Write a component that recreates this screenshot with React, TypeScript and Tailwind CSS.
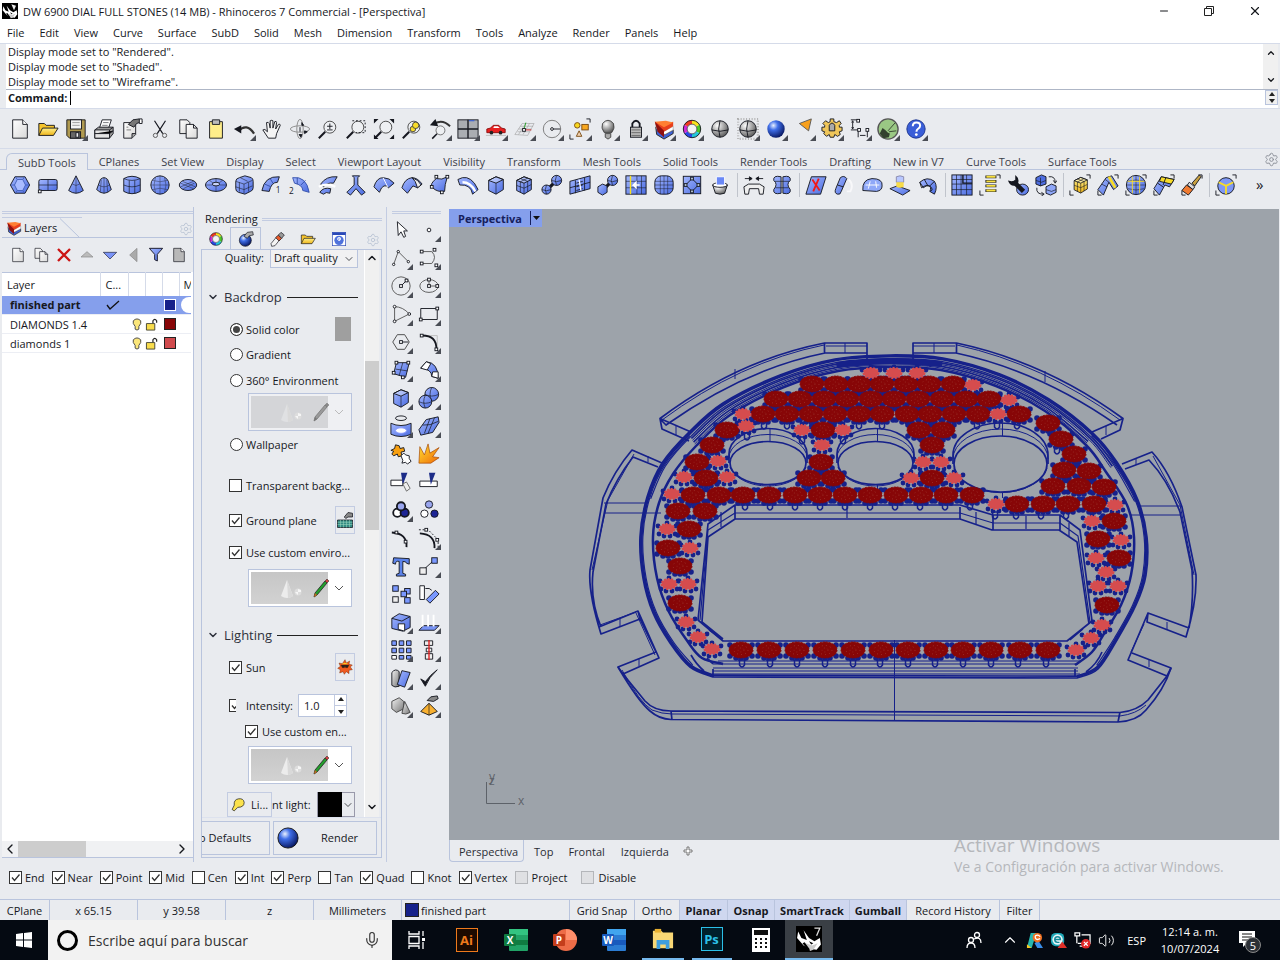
import { useState, type ReactNode } from "react";
import { ChevronDown, ChevronLeft, ChevronRight, ChevronUp, Mic, Minus, Settings, Volume2, X } from "lucide-react";

type Point = [number, number];

const menus = ["File", "Edit", "View", "Curve", "Surface", "SubD", "Solid", "Mesh", "Dimension", "Transform", "Tools", "Analyze", "Render", "Panels", "Help"];

const toolTabs = ["SubD Tools", "CPlanes", "Set View", "Display", "Select", "Viewport Layout", "Visibility", "Transform", "Mesh Tools", "Solid Tools", "Render Tools", "Drafting", "New in V7", "Curve Tools", "Surface Tools"];

const K = "#15171f";
const B = "url(#blue)";
const G = "url(#grey)";
const Y = "url(#yellow)";

/* Small building blocks shared by the icons */
const Sq = ({ x, y, f = "#fff" }: { x: number; y: number; f?: string }) => (
  <rect x={x - 1.5} y={y - 1.5} width="3" height="3" fill={f} stroke={K} strokeWidth="1" />
);
const Ball = ({ x, y, r }: { x: number; y: number; r: number }) => (
  <g stroke={K} fill="none">
    <circle cx={x} cy={y} r={r} fill={B} />
    <path d={`M${x - r} ${y}q${r} ${r / 2} ${2 * r} 0M${x} ${y - r}q${-r / 2} ${r} 0 ${2 * r}`} strokeWidth=".7" />
  </g>
);
const Cube = ({ f = B, grid = false }: { f?: string; grid?: boolean }) => (
  <g stroke={K} strokeLinejoin="round">
    <path d="M4 7l8-4 8 3v11l-8 5-8-4z" fill={f} />
    <path d="M4 7l8 3 8-4-8-3z" fill="#fff" fillOpacity=".35" />
    <path d="M12 10v12" fill="none" strokeWidth=".7" />
    {grid && <path d="M8 8.500v11.500M16 8v11.500M4 12.500l8 3 8-4M8 5l8 3M16 4.500l-8 4" fill="none" strokeWidth=".7" />}
  </g>
);
const Brackets = () => <path d="M1 18v5h4M19 1h4v4" fill="none" stroke={K} />;
const Sheet = ({ f = "url(#paper)" }: { f?: string }) => (
  <g stroke={K} strokeLinejoin="round">
    <path d="M4 2h11l5 5v15H4z" fill={f} />
    <path d="M15 2v5h5" fill="#fff" />
  </g>
);
const Shaded = () => (
  <g stroke={K} fill="none">
    <circle cx="12" cy="12" r="9" fill="url(#steel)" />
    <path d="M3 13q9 3 18 0M12 3q-3 9 0 18" />
  </g>
);
const Layers = () => (
  <g strokeLinejoin="round">
    <path d="M3 10l10 8 9-5v4l-10 6-8-5z" fill="#3e62d6" stroke="#222" />
    <path d="M3 7l10 7 9-5v4l-9 5-9-6z" fill="#fff" stroke="#888" strokeWidth=".6" />
    <path d="M2 4l11 2 9-2v5l-10 6-8-5z" fill="#e8401c" />
    <path d="M2 4l12-1 8 2-10 5z" fill="#ff7f32" />
    <path d="M2 4l3 11 7 6v-7z" fill="#8e1010" />
  </g>
);
const Wheel = () => (
  <g fill="none" strokeWidth="4">
    <path d="M12 4.500a7.500 7.500 0 0 1 6.500 3.750" stroke="#f8e21c" />
    <path d="M18.500 8.250a7.500 7.500 0 0 1 0 7.500" stroke="#4cc928" />
    <path d="M18.500 15.750a7.500 7.500 0 0 1-6.500 3.750" stroke="#22c8d8" />
    <path d="M12 19.500a7.500 7.500 0 0 1-6.500-3.750" stroke="#2848e8" />
    <path d="M5.500 15.750a7.500 7.500 0 0 1 0-7.500" stroke="#d228d8" />
    <path d="M5.500 8.250a7.500 7.500 0 0 1 6.500-3.750" stroke="#f03a20" />
    <circle cx="12" cy="12" r="9.500" stroke={K} strokeWidth="1" />
    <circle cx="12" cy="12" r="5.300" fill="#f4f4f4" stroke={K} strokeWidth=".7" />
  </g>
);
const Folder = () => (
  <g stroke={K} strokeLinejoin="round">
    <path d="M2 19V6h6l2 2h9v4" fill="#f6c42c" />
    <path d="M2 19l4-8h17l-5 8z" fill="url(#yellow)" />
  </g>
);
const Lens = ({ children }: { children?: ReactNode }) => (
  <g fill="none" stroke="#444">
    <path d="M9 15l-7 7" stroke={K} strokeWidth="2.200" />
    <circle cx="14" cy="10" r="6.500" fill="#eef0f3" />
    {children}
  </g>
);

const icons: Record<string, ReactNode> = {
  new: <Sheet />,
  open: <Folder />,
  save: <g stroke={K}><path d="M2 2h20v20H5l-3-3z" fill="#b09a50" /><rect x="6" y="2" width="12" height="10" fill="#f2f2f2" /><rect x="6" y="15" width="11" height="7" fill="#666" /><rect x="12" y="16" width="3" height="5" fill="#eee" /><path d="M8 5h8M8 8h8" stroke="#999" /></g>,
  print: <g stroke={K} strokeLinejoin="round"><path d="M7 11l3-9h10l-3 9z" fill="#fff" /><path d="M2 13l4-3h16v7l-4 5H2z" fill="#999" /><path d="M2 13h16v9H2z" fill="#e4e4e4" /><path d="M18 13l4-3M2 17h16l4-3" /><path d="M11 5h6M10 8h6" strokeWidth=".6" /></g>,
  props: <g stroke={K}><path d="M3 5h13v13l-4 4H3z" fill="url(#paper)" /><path d="M16 17h-4v5" fill="#aaa" /><path d="M8 7l5-5 7-1 3 3-6 2-3 4z" fill="#777" /><path d="M20 1h3v5h-3z" fill="#fff" /><path d="M6 10h2M6 13h5" stroke="#777" /></g>,
  cut: <g fill="none" stroke={K}><path d="M6 3l9 14M18 3L9 17" strokeWidth="1.300" /><circle cx="7" cy="19" r="2.300" stroke="#555" /><circle cx="17" cy="19" r="2.300" stroke="#555" /></g>,
  copy: <g stroke={K} fill="url(#paper)"><path d="M3 2h8l3 3v12H3z" /><path d="M10 7h8l4 4v11H10zM18 7v4h4" /></g>,
  paste: <g stroke={K}><path d="M5 4h14v18H5z" fill="#ffee8a" /><path d="M8 2h8v5H8z" fill="#bbb" /></g>,
  undo: <g><path d="M6 14q9-9 17 3" fill="none" stroke="#333" strokeWidth="2.500" /><path d="M1 12l8-4v9z" fill={K} /></g>,
  hand: <path d="M8 22l-6-9q2-2 5 2L6 5q2-1 3 1l1 5V3q2-1 3 0v8l2-7q2-1 2 1l-1 7 3-5q2-1 2 1l-4 9-1 5z" fill="#f4f4f4" stroke={K} />,
  orbit: <g fill="none" stroke="#888"><ellipse cx="12" cy="12" rx="10.500" ry="3.500" /><ellipse cx="12" cy="12" rx="3.500" ry="10.500" /><path d="M14 8V5l2 3zM11 18l2 3 1-3zM17 14l3 1-3 2zM12 10v5" fill={K} stroke={K} /></g>,
  zoom: <Lens><path d="M11 9h6M14 6v6M11 13h6" stroke={K} /></Lens>,
  zoomWin: <g><Lens /><path d="M8 3h14v13H12" fill="none" stroke={K} strokeDasharray="2 2" /></g>,
  zoomExt: <g><Lens /><path d="M1 6V1h5zM18 1h5v5zM23 18v5h-5zM1 18v5h5z" fill={K} /></g>,
  zoomSel: <g><Lens><circle cx="13" cy="12" r="3" fill="#f8dc28" /><circle cx="16" cy="8" r="3.500" fill="#f8dc28" /></Lens></g>,
  undoView: <g><g transform="translate(2 6) scale(.75)"><Lens /></g><path d="M6 6q9-5 17 3" fill="none" stroke="#333" strokeWidth="2" /><path d="M1 8l6-7 3 8z" fill={K} /></g>,
  views: <g stroke={K}><rect x="1" y="2" width="22" height="20" fill="#aaadb2" /><path d="M12 2v20M1 12h22" strokeWidth="1.500" /><path d="M13 3h6" stroke="#2856e8" /></g>,
  car: <g><path d="M2 12l4-1 3-3h6l3 3 4 1v4H2z" fill="#e82020" stroke="#8c1010" /><path d="M10 9h4l2 2H9z" fill="#fff" /><circle cx="7" cy="16" r="2" fill="#222" /><circle cx="17" cy="16" r="2" fill="#222" /><path d="M1 19h22" stroke="#bbb" /></g>,
  cplane: <g fill="none" stroke="#999"><path d="M2 18L10 6h13l-7 13zM6 12h14M5 15h13M8 9h14M6 18l8-12M11 18l7-12" strokeWidth=".6" /><path d="M12 13h8" stroke="#d02020" /><path d="M12 12l2-7" stroke="#20a020" /><Sq x={12} y={13} /></g>,
  circle: <g fill="none" stroke="#777"><circle cx="12" cy="12" r="9.500" /><path d="M12 12h9" stroke={K} /><circle cx="12" cy="12" r="1.500" fill="#fff" stroke={K} /></g>,
  selObj: <g stroke="#7a4a10"><circle cx="9" cy="8" r="3" fill="#f8d820" /><rect x="14" y="7" width="7" height="6" fill="#f8a820" /><path d="M11 14l3 6H8z" fill="#f2d2b0" /><path d="M1 18v5h4M19 1h4v4" fill="none" stroke={K} /></g>,
  bulb: <g stroke="#444"><path d="M8 16Q4 11 6 6q6-7 12 0 2 5-2 10z" fill="url(#steel)" /><path d="M9 17h6v4l-3 2-3-2z" fill="#aaa" /></g>,
  lock: <g><path d="M8 11V6q4-6 8 0v5" fill="none" stroke={K} strokeWidth="2" /><rect x="6" y="10" width="12" height="11" fill="#bbb" stroke={K} /><path d="M7 13h10M7 16h10M7 19h10" stroke="#666" /></g>,
  layers: <Layers />,
  wheel: <Wheel />,
  shade: <Shaded />,
  shadeSel: <g><path d="M1 1h22v22H1z" fill="none" stroke="#aaa" strokeDasharray="1 2" strokeWidth="3" /><Shaded /></g>,
  render: <circle cx="12" cy="12" r="9.500" fill="url(#sphere)" />,
  spot: <path d="M7 6l13-5-3 13z" fill="#f8a01c" stroke="#555" />,
  gear: <g stroke={K} strokeLinejoin="round" fill="#efc65a"><path d="M10 1h4v3l3 1 3-2 2 3-2 2v2h3v4l-3 1 1 3-3 2-3-2-1 3h-4l-1-3-3 2-3-3 1-2-3-1v-4h3V8L2 6l3-3 3 2 2-1z" /><path d="M9 14V8q3-5 6 0v6z" fill="#aaa" /></g>,
  dim: <g fill="none" stroke={K}><path d="M2 2h8M2 13h8M4 4v7M10 13v8M20 13v8M12 19h6M3 5l1-2 1 2M3 10l1 2 1-2" /><Sq x={10} y={3} /><Sq x={11} y={13} /><Sq x={20} y={13} /></g>,
  rhino: <g><circle cx="12" cy="12" r="11" fill="#9ac884" stroke="#555" strokeWidth="1.500" /><path d="M3 17l3-6 3 2 3 3 2 1-1 4-6 1z" fill="#33402e" /><path d="M12 14l8-9M13 15l8-1" stroke="#33402e" /></g>,
  help: <g><circle cx="12" cy="12" r="10" fill="#3a5ed8" stroke="#1c348c" /><path d="M8.500 9q0-4 4-4t4 3.500q0 2-2.500 3.500-1.500 1-1.500 3" fill="none" stroke="#fff" strokeWidth="2.200" /><circle cx="12.300" cy="18" r="1.500" fill="#fff" /></g>,

  subHex: <g stroke={K}><path d="M1.500 12l5-9h11l5 9-5 9h-11z" fill={B} /><path d="M6 12l3-6h6l3 6-3 6H9z" fill="#a9bcff" stroke="#4460b8" /><path d="M2 12h4M22 12h-4M7 3l2 3M17 3l-2 3M7 21l2-3M17 21l-2-3" stroke="#4460b8" /></g>,
  subPlane: <g stroke={K}><rect x="2" y="6" width="20" height="12" rx="2" fill={B} /><path d="M2 12h20M12 6v12" strokeWidth=".7" /><Sq x={3} y={19} /></g>,
  cone: <g stroke={K} fill="none"><path d="M12 2l8 16q-8 6-16 0z" fill={B} /><path d="M12 3v18M8 11q4 3 8 0" strokeWidth=".5" /></g>,
  tcone: <g stroke={K} fill="none"><path d="M8 6q4-4 8 0l4 11q-8 8-16 0z" fill={B} /><path d="M12 4v17M6 12q6 4 12 0M9 6L8 20M15 6l1 14" strokeWidth=".5" /></g>,
  cyl: <g stroke={K} fill="none"><path d="M3 5q9-5 18 0v14q-9 5-18 0z" fill={B} /><path d="M3 5q9 4 18 0M3 12q9 4 18 0M9 7v14M15 7v14" strokeWidth=".7" /></g>,
  ball: <g stroke={K} fill="none"><circle cx="12" cy="12" r="10" fill={B} /><path d="M2 12h20M12 2v20M4 7q8 3 16 0M4 17q8-3 16 0M7 4q-3 8 0 16M17 4q3 8 0 16" strokeWidth=".4" /></g>,
  ell: <g stroke={K} fill="none"><ellipse cx="12" cy="12" rx="9.500" ry="6" fill={B} /><path d="M4 10l14 6M6 8l14 6M4 14l14-6M7 16l12-6" strokeWidth=".5" /></g>,
  torus: <g stroke={K} fill="none"><ellipse cx="12" cy="12" rx="11.500" ry="7" fill={B} /><ellipse cx="12" cy="11" rx="4" ry="2" fill="#c8d2f8" /><path d="M12 13v6M12 5v4M1 12h7M16 12h7M5 7l4 3M19 7l-4 3" strokeWidth=".5" /></g>,
  sbox: <g stroke={K}><path d="M3 8q0-3 4-4l6-2 7 2q2 1 2 4v7q0 3-3 4l-6 3-7-2q-3-1-3-4z" fill={B} /><path d="M3 8l9 3 9-4M12 11v10M7 9v10M17 9v10M3 14l9 3 9-4M8 4l8 4" fill="none" strokeWidth=".6" /></g>,
  loft1: <g><path d="M1 18Q4 2 20 3l-2 6q-7 0-9 10z" fill={B} stroke={K} /><path d="M4 11l7 3M10 5l3 5" stroke="#3450aa" /><text x="16" y="21" fontSize="9" fill={K}>1</text></g>,
  loft2: <g><path d="M4 4q15-2 18 16l-7-2q0-6-9-8z" fill={B} stroke="#3450aa" /><path d="M9 4v7M18 7l-5 5" stroke="#3450aa" /><text x="0" y="22" fontSize="9" fill={K}>2</text></g>,
  sweep: <g stroke={K} fill={B}><path d="M4 11q6-9 18-8l-4 7q-7-1-11 4zM3 20q4-6 12-4l-1 5q-4-2-7 1z" /><path d="M2 14q9-5 18 0" fill="none" stroke="#fff" strokeWidth="2.500" /></g>,
  branch: <path d="M8 2h8l-2 2v8l8 8-4 3-6-7-6 7-4-3 8-8V4z" fill={B} stroke={K} />,
  bend: <g stroke={K}><path d="M1 14Q4 4 11 4q7 0 12 6l-6 5q-2-3-5-2-3 1-5 7z" fill={B} /><path d="M11 4l5 10" stroke="#fff" /></g>,
  bend2: <g stroke={K}><path d="M1 15Q4 5 12 4q6 0 11 7l-5 4-5-2-6 8z" fill={B} /><path d="M12 4q4 3 6 11l4-3q-3-6-10-8z" fill="#eee" /></g>,
  patch: <g stroke={K}><path d="M8 5q6 2 12-2-3 9-3 16-8 1-13-4-4-4 4-10z" fill={B} /><Sq x={8} y={3} /><Sq x={20} y={3} /><Sq x={3} y={14} /><Sq x={14} y={20} /></g>,
  strip: <g stroke={K}><path d="M1 6q10-6 18 4l4 7-6 5Q15 11 3 12z" fill={B} /><path d="M6 9q9 0 14 10" fill="none" stroke="#fff" strokeWidth="2.500" /></g>,
  cube: <Cube />,
  cubeGrid: <Cube grid />,
  balls: <g><path d="M8 16l9-9" stroke={K} strokeWidth="3.500" /><Ball x={17} y={7} r={5.5} /><Ball x={6} y={17} r={5} /></g>,
  bridge: <g stroke={K} fill="none"><path d="M1 8l22-6v14L1 22z" fill={B} /><path d="M7 7v14M17 4v14M1 15l22-6M8 10l7-2M8 14l7-2M8 18l7-2" strokeWidth=".9" /><path d="M11 6l2 12" stroke="#fff" strokeWidth="1.500" /></g>,
  boxBall: <g><path d="M8 16l9-9" stroke={K} strokeWidth="3.500" /><Ball x={17} y={7} r={5.5} /><path d="M1 14l5-3 5 2v7l-5 3-5-3z" fill={B} stroke={K} /></g>,
  insert: <g stroke={K}><rect x="1" y="2" width="22" height="20" fill={B} /><path d="M1 8h22M1 15h22M13 2v20M18 2v20" strokeWidth=".6" /><path d="M6 2v20" stroke="#f8e020" strokeWidth="1.500" /><path d="M16 12H9l3-3v6l-3-3" stroke="#fff" strokeWidth="1.500" fill="none" /></g>,
  gball: <g stroke={K} fill="none"><rect x="2" y="2" width="20" height="20" rx="7" fill={B} /><path d="M2 8h20M2 12h20M2 16h20M8 2v20M12 2v20M16 2v20" strokeWidth=".5" /></g>,
  diamond: <g stroke={K}><rect x="2.500" y="2.500" width="19" height="19" fill={B} /><path d="M12 5l7 7-7 7-7-7z" fill="none" /><Sq x={12} y={5} f="#bcd" /><Sq x={12} y={19} f="#bcd" /><Sq x={5} y={12} f="#bcd" /><Sq x={19} y={12} f="#bcd" /></g>,
  bin: <g stroke={K}><path d="M4 12h16l-3 9q-5 2-10 0z" fill="url(#steel)" /><ellipse cx="12" cy="12" rx="8" ry="2.500" fill="#fff" /><path d="M8 3h9v9H8z" fill="#6a88f6" stroke="#fff" /></g>,
  align: <g stroke={K} fill="#eee"><path d="M2 5h7M22 5h-7M7 3l3 2-3 2zM17 3l-3 2 3 2z" fill={K} /><path d="M1 14l5-3h12l5 3-1 8h-4l-1-6H7l-1 6H2z" /></g>,
  sym: <g stroke={K}><path d="M11 3q-9-2-8 4 5 4 0 10-1 6 8 4zM13 3q9-2 8 4-5 4 0 10 1 6-8 4z" fill={B} /><path d="M4 8h16M5 15h14" strokeWidth=".7" /></g>,
  cross: <g stroke={K}><path d="M7 3h16l-6 19H1z" fill={B} /><path d="M8 6l8 12M15 5L9 19" stroke="#f01818" strokeWidth="2" /></g>,
  tube: <g stroke={K}><path d="M5 22q-4-1-2-6L8 4q4-3 7 1L9 19q-1 4-4 3z" fill={B} /><path d="M5 12l6 2" /><path d="M17 6q6 5 2 13h-4" fill="none" stroke="#f8f8fa" strokeWidth="2" /></g>,
  dome: <g stroke={K} fill="none"><path d="M2 18q-1-12 10-13 12 0 11 8 0 5-6 6z" fill="#8fa8f8" /><path d="M8 16l2-8M17 15l-1-7M5 12h15" stroke="#fff" /></g>,
  plane: <g stroke={K}><path d="M1 16l8-3 14 5-8 5z" fill={B} /><path d="M8 3q4-2 8 0v6H8z" fill="#b9c8ff" stroke="#88a" /><path d="M8 9h8v5q-4 2-8 0z" fill="#f8dc48" stroke="none" /></g>,
  thick: <g stroke={K} fill="#ddd"><path d="M3 9q8-7 16-1 4 6 0 14l-5-3q2-5-1-6-3-1-6 2z" fill={B} /><path d="M3 9l2 6q7-5 11 0 2 3-2 4M8 6l4 7M19 8l-5 5" fill="none" /></g>,
  quad: <g stroke={K} fill="none"><rect x="1" y="1" width="22" height="22" fill={B} /><path d="M1 6h22M1 11h22M1 17h22M6 1v22M11 1v22M17 1v22" strokeWidth=".7" /><path d="M13 1v9h10" strokeWidth="1.500" /></g>,
  list: <g stroke={K}><path d="M7 3h12M7 8h12M7 13h12M7 18h12" strokeWidth="3" stroke="#222" /><path d="M8 3h10M8 8h10M8 13h10M8 18h10" stroke="#f8e040" strokeWidth="2" /><Brackets /></g>,
  wrench: <g><ellipse cx="17" cy="17" rx="6.500" ry="6" fill={B} stroke={K} /><path d="M7 8l11 11" stroke={K} strokeWidth="5" /><path d="M1 7q3 8 10 5 4-6-2-11v6l-4 1z" fill={K} /></g>,
  convert: <g stroke={K}><path d="M1 4l6-3 5 2v8l-6 2-5-2z" fill="#4d6de0" /><path d="M12 14l6-3 5 2v7l-6 3-5-2z" fill="#8ea6f8" /><path d="M15 3q7-1 7 6M2 15q-1 7 7 7M20 7l2 3 2-3M7 20l3 2-3 2" fill="none" /><path d="M1 7l6 2 5-2M6 4v9M12 17l6 2 5-2" fill="none" strokeWidth=".7" /></g>,
  yBox: <g><g transform="translate(2 1) scale(.9)"><Cube f={Y} grid /></g><Brackets /></g>,
  yRidge: <g stroke={K}><path d="M1 17L10 4l6-2 7 11-5 4-5-8-6 14z" fill={B} /><path d="M13 3l7 12" stroke="#f8dc28" strokeWidth="3" /><path d="M5 11l6 3M9 6l4 3" strokeWidth=".7" /><Brackets /></g>,
  yBall: <g><circle cx="12" cy="12" r="10.500" fill={B} stroke={K} /><path d="M2 12h20M3 8q9-3 18 0M3 16q9 3 18 0M12 2v20" stroke="#222" fill="none" strokeWidth=".6" /><path d="M8 3v18M16 3v18M3 8h18" stroke="#f8dc28" fill="none" /><Brackets /></g>,
  yArc: <g stroke={K}><path d="M1 16L9 3l14 3-5 8-5-2-6 11z" fill={B} /><path d="M9 3l14 3-3 5-13-3z" fill="#f8dc28" /><path d="M14 4l-3 8M5 10l6 4" /><Brackets /></g>,
  brush: <g stroke={K}><path d="M12 10l8-9 2 2-7 10z" fill="#c8a040" /><path d="M9 9l6 5-2 3-6-5z" fill="#ddd" /><path d="M6 12l7 5-5 6-7-5z" fill="#f07a30" /><Brackets /></g>,
  yHex: <g><circle cx="12" cy="13" r="9" fill="#7f98f4" stroke={K} /><path d="M12 13v9M12 13L4 9M12 13l8-4" stroke="#f8dc28" strokeWidth="2" /><Brackets /></g>,

  arrow: <path d="M8 3l1 15 3-4 3 6 2-1-2-6h4z" fill="#fff" stroke={K} />,
  point: <circle cx="12" cy="12" r="2" fill="#fff" stroke={K} />,
  poly: <g fill="none" stroke="#555"><path d="M4 19L9 5l11 11" /><circle cx="4" cy="19" r="1.300" fill="#fff" stroke={K} /><circle cx="9" cy="5" r="1.300" fill="#fff" stroke={K} /><circle cx="20" cy="16" r="1.300" fill="#fff" stroke={K} /></g>,
  curve: <g fill="none" stroke="#555"><path d="M4 5h11q6 6 0 13H4" /><Sq x={4} y={5} /><Sq x={18} y={3} /><Sq x={4} y={18} /><Sq x={20} y={20} /></g>,
  circ: <g fill="none" stroke="#555"><circle cx="12" cy="12" r="10" /><path d="M12 12l6-6" stroke={K} /><Sq x={12} y={12} /><Sq x={18} y={6} /></g>,
  ellipse: <g fill="none" stroke="#555"><ellipse cx="12" cy="12" rx="10" ry="7" /><path d="M12 5v7h9" /><Sq x={12} y={5} /><Sq x={12} y={12} /><Sq x={21} y={12} /></g>,
  arc: <g fill="none" stroke="#555"><path d="M5 20V4q9 0 16 8z" /><circle cx="5" cy="20" r="1.500" fill="#fff" stroke={K} /><circle cx="5" cy="4" r="1.500" fill="#fff" stroke={K} /><circle cx="21" cy="12" r="1.500" fill="#fff" stroke={K} /></g>,
  rect: <g fill="none" stroke={K}><path d="M3 6h18v12H3z" /><Sq x={3} y={18} /><Sq x={21} y={6} /></g>,
  polygon: <g fill="none" stroke="#444"><path d="M3 12l5-8h8l5 8-5 8H8z" /><path d="M12 12h8" stroke={K} /><Sq x={12} y={12} /></g>,
  fillet: <g fill="none"><path d="M3 5h18v16" stroke="#bbb" /><path d="M3 5q18-1 17 16" stroke={K} strokeWidth="2" /><Sq x={4} y={5} /><Sq x={20} y={20} /></g>,
  surf: <g stroke={K}><path d="M7 4h14l-4 16-13-4z" fill={B} /><path d="M6 11l13 2M14 4l-4 14" strokeWidth=".7" /><Sq x={7} y={4} /><Sq x={20} y={4} /><Sq x={4} y={15} /><Sq x={14} y={20} /></g>,
  loft: <g stroke={K}><path d="M3 10L9 3q13 1 13 18l-7-2q0-8-12-9z" fill={B} /><path d="M3 10l6-7 5 2-4 7zM22 14v7l-7-2 1-5z" fill="#fff" /></g>,
  spheres: <g><Ball x={15} y={8} r={7.5} /><Ball x={8} y={16} r={7} /></g>,
  cylHole: <g stroke={K} fill="none"><ellipse cx="12" cy="3.500" rx="6" ry="2.500" /><path d="M1 9q11 5 22 0v12q-11 5-22 0z" fill={B} /><ellipse cx="12" cy="17" rx="6" ry="3" fill="#fff" stroke="#89f" /></g>,
  mesh: <g stroke={K}><path d="M1 16L9 5l13-3 1 6-7 11-13 3z" fill={B} /><path d="M5 11q8 1 17-4M13 4L7 20M18 3l-7 17" fill="none" strokeWidth=".8" /></g>,
  puzzle: <g stroke={K}><path d="M1 8l4-2 1-4 4 1 1 3 4-1 1 4-4 1 1 4-4 1-1-3-4 2-2-2 2-3z" fill="#f8a010" /><path d="M12 14l3-3 2 2 4 1v3l2 3-4 3-2-2-4 1 1-3z" fill="#fff" /></g>,
  explode: <path d="M1 22L2 4l5 9 4-12 2 10 10-6-7 10 7 1-9 6z" fill="url(#fire)" stroke="#a04000" strokeWidth=".7" />,
  trim: <g><path d="M1 10h13v6H1z" fill="#fff" stroke={K} /><path d="M12 2h7l-5 13z" fill="#1c2c88" /><path d="M14 14l4-2 4 7-4 3z" fill="#eee" stroke="#666" /></g>,
  split: <g><path d="M2 11h19v6H2z" fill="#fff" stroke={K} /><path d="M12 2h7l-5 13z" fill="#1c2c88" /></g>,
  group: <g stroke={K} strokeWidth="2"><circle cx="8" cy="15" r="4.500" fill="#fff" /><circle cx="16" cy="15" r="4.500" fill="#1c2494" /><circle cx="12" cy="8" r="4.500" fill="#99a5ee" /></g>,
  ungroup: <g stroke={K}><circle cx="12" cy="6" r="4" fill="#99a5ee" /><circle cx="7" cy="16" r="4" fill="#fff" /><circle cx="18" cy="16" r="4" fill="#1c2494" /></g>,
  editPt: <g><path d="M2 6q17 1 16 16" fill="none" stroke={K} strokeWidth="2" /><Sq x={7} y={6} /><Sq x={17} y={16} /></g>,
  ctrlPt: <g><path d="M2 7q17 1 16 16" fill="none" stroke={K} strokeWidth="2" /><path d="M1 3h10l11 11v8" fill="none" stroke={K} strokeDasharray="2 2" /><Sq x={9} y={3} /><Sq x={21} y={14} /></g>,
  text: <path d="M4 3l17 1v6l-3-1q0-2-4-2v13l3 1v2H7v-2l3-1V7q-4-1-4 3l-3-1z" fill="#5b82ea" stroke={K} />,
  scale: <g><path d="M5 17L16 7" stroke={K} /><rect x="2" y="14" width="7" height="7" fill="#eee" stroke={K} /><rect x="15" y="3" width="6" height="6" fill="#7a98ff" stroke={K} /></g>,
  arr: <g stroke={K} fill="#7a98ff"><rect x="3" y="3" width="6" height="6" /><rect x="16" y="6" width="6" height="6" /><rect x="12" y="9" width="6" height="6" /><rect x="16" y="16" width="6" height="6" /><rect x="3" y="15" width="6" height="6" fill="#eee" /></g>,
  rotate: <g stroke={K}><path d="M2 3h5v15H2z" fill="#fff" /><path d="M9 18l10-10 4 4-10 10z" fill="#7a98ff" /><path d="M8 6q5-1 7 2" fill="none" /></g>,
  solid: <g stroke={K}><path d="M2 8l8-5 12 3v12l-8 4-12-3z" fill={B} /><path d="M2 8l11 3 9-5" fill="none" /><path d="M9 14h7v8l-7-2z" fill="#fff" /></g>,
  project: <g stroke={K}><path d="M1 21l5-5h17l-5 5z" fill="#7894f6" /><path d="M5 4v13M11 4v13M17 4v13" stroke="#fff" strokeWidth="2" /></g>,
  array: <g stroke={K} fill="#7a98ff"><path d="M2 2h5v5H2zM10 2h5v5h-5zM18 2h5v5h-5zM2 10h5v5H2zM10 10h5v5h-5zM18 10h5v5h-5zM10 18h5v4h-5zM18 18h5v4h-5z" /><path d="M2 18h5v4H2z" fill="#fff" /></g>,
  dist: <g stroke={K} fill="#eee"><path d="M7 2h9v5H7zM9 10h6v4H9zM8 16h8v6H8z" /><path d="M12 1v22" stroke="#e02020" strokeWidth="1.500" /></g>,
  cyls: <g stroke={K}><path d="M2 6q4-5 8-1v16q-5 2-8-1z" fill={G} /><path d="M13 4l9 2-6 16-8-3z" fill={B} /></g>,
  check: <path d="M3 13l5 8q4-10 13-18-8 6-13 13z" fill={K} stroke={K} />,
  shapes: <g stroke="#444" fill={G}><path d="M2 7l8-4 5 4v8l-8 4-5-4z" /><path d="M16 7l6 12q-5 3-9 1z" /></g>,
  pyramid: <g stroke={K}><path d="M12 9l9 9-9 4-9-4z" fill="#f8b030" /><path d="M12 9v13" strokeWidth=".7" /><path d="M10 6l4-4 7-1 1 3-5 3z" fill="#888" /></g>,
  up: <path d="M3 15l9-8 9 8z" fill="#bbb" stroke="#888" />,
  down: <path d="M2 8h20l-10 10z" fill="#7a94f8" stroke="#223" />,
  left: <path d="M18 2v20L7 12z" fill="#aaa" stroke="#888" />,
  del: <path d="M3 3l18 18M21 3L3 21" stroke="#cc1414" strokeWidth="3.500" />,
  filter: <path d="M2 2h20l-8 9v10l-4-2v-8z" fill={B} stroke="#223" strokeWidth="1.500" />,
  page2: <Sheet f="#b8b8b8" />,
  ballHand: <g><circle cx="11" cy="14" r="9" fill="url(#sphere)" stroke={K} /><path d="M9 8l5-6 8-1 1 5-6 1-3 4z" fill="#aaa" stroke={K} /></g>,
  tube2: <g stroke={K}><path d="M3 19l9-11 5 4-8 10-5 1z" fill="#f4f4f4" /><path d="M10 10l4-4 5 5-4 4z" fill="#e85a2a" /><path d="M14 6l4-4 5 4-4 5z" fill="#999" /></g>,
  helpWin: <g><rect x="2" y="2" width="20" height="20" fill="#fff" stroke="#2a49b8" /><path d="M2 2h20v4H2z" fill="#2a49b8" /><circle cx="12" cy="14" r="7" fill="#4f72dc" /><path d="M10 13q0-3 2-3t2 2q0 1-2 2v1" fill="none" stroke="#fff" strokeWidth="2" /></g>,
  grid: <g><path d="M2 12h20v10H2z" fill="#348c84" stroke={K} /><path d="M2 15h20M2 18h20M6 12v10M10 12v10M14 12v10M18 12v10" stroke="#9fd8c0" strokeWidth=".7" /><path d="M11 8l5-6 6 1v5h-6l-3 2z" fill="#888" stroke={K} /></g>,
  sun: <g stroke="#602000" strokeWidth=".6"><path d="M12 1l2 5 5-3-1 5 5 1-3 3 3 4-5 1v5l-4-3-3 4-2-4-5 2 1-5-4-2 4-3-2-5 5 1z" fill="#f05a20" /><path d="M7 8q5-5 10 0z" fill="#f8c820" stroke="none" /><path d="M6 9h12l-2 4h-3l-1-2-1 2H8z" fill="#222" /></g>,
  lightBulb: <path d="M6 21l-3-2 3-6q-1-8 6-9 7-1 8 5 0 7-9 7z" fill="#fbe24c" stroke={K} />,
};

const standardTools = ["new", "open", "save*", "print", "props", "cut", "copy", "paste", "undo*", "hand", "orbit", "zoom", "zoomWin", "zoomExt", "zoomSel", "undoView*", "views*", "car*", "cplane*", "circle*", "selObj*", "bulb*", "lock*", "layers*", "wheel*", "shade", "shadeSel*", "render*", "spot*", "gear*", "dim*", "rhino*", "help*"];

const subdTools = [
  ["subHex", "subPlane", "cone", "tcone", "cyl", "ball", "ell", "torus", "sbox", "loft1", "loft2", "sweep", "branch", "bend", "bend2", "patch", "strip", "cube", "cubeGrid", "balls", "bridge", "boxBall", "insert", "gball", "diamond", "bin"],
  ["align", "sym"],
  ["cross", "tube", "dome", "plane", "thick"],
  ["quad", "list", "wrench", "convert"],
  ["yBox", "yRidge", "yBall", "yArc", "brush"],
  ["yHex"],
];

const sideTools = ["arrow", "point*", "poly*", "curve*", "circ*", "ellipse*", "arc*", "rect*", "polygon*", "fillet*", "surf*", "loft*", "cube*", "spheres*", "cylHole*", "mesh*", "puzzle", "explode", "trim", "split", "group*", "ungroup", "editPt", "ctrlPt*", "text", "scale*", "arr", "rotate", "solid*", "project*", "array*", "dist*", "cyls*", "check*", "shapes*", "pyramid*"];

function Icon({ name, className = "size-6" }: { name: string; className?: string }) {
  return <svg viewBox="0 0 24 24" className={className} aria-hidden="true">{icons[name]}</svg>;
}

/* A trailing * marks a tool that opens a fly-out */
function ToolButton({ id }: { id: string }) {
  const name = id.replace("*", "");
  return (
    <button type="button" aria-label={name} className="relative grid size-7 shrink-0 place-items-center hover:bg-[#d5dcf3]">
      <Icon name={name} className="size-[22px]" />
      {id.endsWith("*") && (
        <svg viewBox="0 0 5 5" className="absolute right-[2px] bottom-[2px] size-[6px]" aria-hidden="true"><path d="M5 0v5H0z" fill="#4a4d55" /></svg>
      )}
    </button>
  );
}

function Check({ label, on = false, off = false, half = false, tight = false }: { label: string; on?: boolean; off?: boolean; half?: boolean; tight?: boolean }) {
  const [checked, setChecked] = useState(on);
  return (
    <label className={`flex items-center whitespace-nowrap ${tight ? "gap-[3px]" : "gap-1"}`}>
      <span className={half ? "mr-[6px] grid w-[7px] overflow-hidden" : "grid"}>
        <input
          type="checkbox"
          checked={checked}
          disabled={off}
          onChange={(e) => setChecked(e.target.checked)}
          className="peer col-start-1 row-start-1 size-[13px] appearance-none border border-[#333] bg-white disabled:border-[#b4b6ba] disabled:bg-[#dfe0e3]"
        />
        <svg viewBox="0 0 13 13" className="pointer-events-none col-start-1 row-start-1 hidden size-[13px] peer-checked:block" aria-hidden="true">
          <path d="M3 6.500l2.500 3L10.500 3.500" fill="none" stroke="#333" strokeWidth="1.300" />
        </svg>
      </span>
      {label}
    </label>
  );
}

function Radio({ label, on = false }: { label: string; on?: boolean }) {
  return (
    <label className="flex items-center gap-[3px]">
      <input type="radio" name="backdrop" defaultChecked={on} className="size-[13px] appearance-none rounded-full border border-[#333] bg-white checked:bg-[#444] checked:shadow-[inset_0_0_0_2px_#fff]" />
      {label}
    </label>
  );
}

function EnvPicker({ dim = false }: { dim?: boolean }) {
  return (
    <button type="button" aria-label="Environment" className={`ml-[46px] flex h-[38px] w-[104px] shrink-0 items-center border border-[#b9c4dd] p-[2px] ${dim ? "bg-[#eff0f3]" : "bg-white"}`}>
      <svg viewBox="0 0 98 32" className="h-8 w-[98px]" aria-hidden="true">
        <rect width="77" height="32" fill={dim ? "#d4d5d8" : "url(#env)"} />
        <path d="M36 8l6 16q-6 4-12 0z" fill={dim ? "#e0e1e3" : "#ececec"} />
        <path d="M36 8l6 16q-2 2-5 2z" fill="#d9d9d9" />
        <circle cx="47" cy="20" r="3.500" fill="#ddd" />
        <path d="M47 17v3h3v-2zM44 20h3v3z" fill="#f6f6f6" />
        <path d="M63 25l1-4 10-12 2 2-10 12z" fill={dim ? "#999" : "#23a02c"} stroke={dim ? "#777" : "#222"} strokeWidth=".8" />
        <path d="M74 9l2-2 2 2-2 2z" fill={dim ? "#888" : "#d04040"} stroke={dim ? "#777" : "#222"} strokeWidth=".5" />
        <path d="M63 25l1-4 2 2z" fill={dim ? "#777" : "#c86a20"} />
        <path d="M84 14l4 4 4-4" fill="none" stroke={dim ? "#bbb" : "#555"} />
      </svg>
    </button>
  );
}

function Section({ title }: { title: string }) {
  return (
    <h3 className="flex h-5 items-center gap-[5px] pl-[5px] text-[13px] text-[#2e323c]">
      <ChevronDown className="size-3" strokeWidth={3} />
      {title}
      <span className="h-px flex-1 bg-[#222]" />
    </h3>
  );
}

function Grip() {
  return <div className="h-[3px] border-y border-[#c3cce2]" />;
}

/* ---------- wireframe model ---------- */

// Smooth open path through the points (Catmull-Rom to Bezier)
function smooth(p: Point[]) {
  let d = `M${p[0][0]} ${p[0][1]}`;
  for (let i = 0; i < p.length - 1; i++) {
    const a = p[i - 1] ?? p[i];
    const b = p[i];
    const c = p[i + 1];
    const e = p[i + 2] ?? c;
    d += `C${b[0] + (c[0] - a[0]) / 6} ${b[1] + (c[1] - a[1]) / 6} ${c[0] - (e[0] - b[0]) / 6} ${c[1] - (e[1] - b[1]) / 6} ${c[0]} ${c[1]}`;
  }
  return d;
}

const ringOuter: Point[] = [[713, 677], [690, 667], [670, 643], [653, 613], [643, 578], [640, 537], [647, 497], [662, 463], [688, 433], [723, 403], [780, 375], [835, 359], [890, 355], [943, 358], [1000, 374], [1049, 399], [1093, 433], [1117, 462], [1138, 500], [1147, 537], [1146, 575], [1136, 605], [1117, 640], [1098, 669], [1077, 678]];
const ringInner: Point[] = [[723, 664], [702, 658], [688, 642], [669, 612], [657, 578], [653, 537], [659, 503], [673, 474], [696, 446], [730, 415], [784, 387], [838, 371], [890, 367], [941, 370], [996, 386], [1045, 411], [1086, 445], [1106, 472], [1127, 505], [1134, 537], [1131, 575], [1121, 605], [1105, 632], [1092, 652], [1075, 665]];

const between = (t: number, from = 0, to = 25) =>
  smooth(ringOuter.slice(from, to).map(([x, y], i) => {
    const q = ringInner[i + from];
    return [x + (q[0] - x) * t, y + (q[1] - y) * t] as Point;
  }));

const row = (y: number, ...xs: number[]): Point[] => xs.map((x) => [x, y]);

const bigStones: Point[] = [
  ...row(384, 812, 836, 859, 882, 906, 929, 953),
  ...row(399, 776, 800, 824, 847, 871, 894, 918, 942, 966, 989),
  ...row(414, 763, 787, 811, 835, 859, 882, 907, 930, 954, 978, 1019),
  ...row(430, 727, 823, 919, 943),
  ...row(445, 712, 932),
  ...row(462, 697, 821),
  ...row(478, 706, 809, 833, 932),
  ...row(495, 693, 719, 743, 769, 795, 820, 845, 870, 896, 921, 946, 972),
  ...row(511, 678, 705), [689, 529], [668, 548], [680, 566], [680, 603],
  [1048, 423], [1061, 439], [1074, 454], [1064, 470], [1089, 471], [1053, 486], [1079, 486], [1104, 487],
  ...row(504, 1017, 1043, 1068, 1094), [1114, 521], [1098, 539], [1119, 558], [1107, 605],
  ...row(650, 741, 769, 797, 825, 853, 881, 908, 936, 963, 991, 1020, 1048),
];

const smallStones: Point[] = [
  ...row(373, 871, 894, 917), [973, 385], [1009, 400], [998, 414], [743, 414], [746, 426],
  ...row(430, 802, 843), [822, 445], [718, 461], [684, 477], [727, 477], [672, 494], [667, 529], [690, 548],
  ...row(462, 923, 941), ...row(478, 911, 954), [996, 504], [1115, 505], [1092, 521], [1121, 540], [1096, 558],
  [1106, 572], ...row(586, 1098, 1118), [1102, 625], [1091, 638], [1076, 650],
  ...row(584, 669, 688), [686, 622], [698, 637], [712, 649],
];

// Small loops that hang under the edge rows
const loops: Point[] = [
  ...row(508, 745, 770, 795, 820, 845, 870, 895, 920, 945, 970),
  ...row(517, 995, 1016, 1041, 1066),
  ...row(665, 742, 770, 797, 825, 853, 880, 908, 935, 963, 991, 1018, 1046),
  ...row(427, 764, 787, 859, 882, 977, 997, 1017), [747, 438], [802, 442], [843, 442], [1057, 452],
];

// Prong offsets round a stone, big then small
const bigProngs: Point[] = [[-11, -5], [11, -5], [-11, 6], [11, 6], [0, 8], [-5, 8], [5, 8]];
const smallProngs: Point[] = [[-9, -3], [9, -3], [-8, 5], [8, 5], [0, -6], [-3, 7], [3, 7]];

function WireModel() {
  return (
    <svg viewBox="450 209 828 631" className="block h-full w-full" preserveAspectRatio="xMidYMid meet" role="img" aria-label="Wireframe of the dial">
      <g fill="none" stroke="#16218a" strokeWidth="1.700" strokeLinejoin="round">
        {/* top lugs */}
        <path d="M867 364V343H824.500Q738 360 660 418.500L662 429L689 441M660 418.500L691 432M824.500 343V353H867M825 353Q745 369 666 425L660 419" />
        <path d="M826 346H867M845 343V353M824 345Q740 362 662 420M735 369V379M676 425V435" strokeWidth="1" />
        <path d="M913 364V343H956.500Q1046 362 1123 418.500L1120 430L1101 439M1123 418.500L1092 432M956.500 343V353H913M956 353Q1040 371 1117 425" />
        <path d="M955 346H913M934 343V353M957 345Q1043 364 1120 420M1045 371V382M1106 426V435" strokeWidth="1" />
        {/* side lugs */}
        <path d="M662 463L632 450Q614 471 603 498L590 570Q588 592 601 634L640 619L638 611L599 627M658 467L633 457Q616 479 606 504L593 572Q590 600 601 627M638 611L659 658L623 674L618 667L656 652L640 619" />
        <path d="M604 503H645M605 513H661M636 613L655 655M620 619V627M639 659V666M648 456V462M634 454L608 500L592 570M600 625L636 612" strokeWidth="1" />
        <path d="M1122 464L1152 452Q1170 472 1182 507L1196 575Q1197 602 1186 637L1147 622L1148 613L1189 628M1125 469L1149 460Q1168 480 1180 512L1192 570Q1194 600 1189 628M1148 613L1128 660L1167 676L1171 668L1132 653" />
        <path d="M1141 506H1181M1130 515H1181M1144 624L1131 652M1167 622V630M1149 660V667M1136 458V465M1153 456L1180 505L1194 575" strokeWidth="1" />
        {/* bottom plate */}
        <path d="M618 667Q638 701 650 711Q659 719 671 719.500L1118 722Q1137 721 1146 710Q1164 690 1171 668M623 674L645 701Q654 711 671 711L1120 712.500Q1137 711 1148 700L1167 676M671 711L672 720M1120 712L1118 722" />
        <path d="M894.500 640V720M672 714L894 715L1120 716M622 670Q640 703 652 710Q662 714 672 714M1120 716Q1136 714 1146 705" strokeWidth="1" />
        {/* bezel ring */}
        <path d={`${between(0)}Z`} />
        <path d={`${between(0.14)}Z`} />
        <path d={between(0.07)} />
        <path d={between(1)} strokeWidth="2.500" />
        <path d={between(0.22, 1, 9)} strokeWidth="1.200" />
        <path d={between(0.22, 16, 24)} strokeWidth="1.200" />
        <path d={between(0.3, 6, 19)} strokeWidth="1.200" />
        <path d={between(0.42, 8, 18)} />
        <path d={between(0.56, 8, 18)} strokeWidth="1" />
        <path d={between(0.7, 8, 17)} />
        <path d={between(0.84, 8, 17)} strokeWidth="1" />
        <path d={between(0.5, 11, 14)} strokeWidth="6" />
        <path d="M713 664H1078M713 668H1078M713 671H1078M712 674H1080" strokeWidth="1.200" />
        <path d="M713 664L707 658M713 669V677M1075 669V677M704 671Q696 664 691 655M1086 672Q1097 664 1102 652" />
        {/* window */}
        <path d="M735 505H960L993 515H1060L1080 530L1092 621L1067 641H723L698 620L708 524ZM735 519H960L992 530H1059L1077 542L1089 624M735 519L708 537L702 622L723 639M735 505V519M960 507V519M993 515V530M1060 515V530" />
        <path d="M735 513H960L993 523H1060L1078 536L1090 622M735 513L708 530L700 620M718 661H1080M721 512V527M847 505V518M1026 516V529M976 512V524M1069 523V536M709 630L720 638M1083 629L1070 640" strokeWidth="1.200" />
        {/* sub-dial openings */}
        {[[768, 463, 38, 21.5], [875.5, 463, 37.5, 21.5], [1000.5, 464, 46.5, 28]].map(([x, y, rx, ry]) => (
          <g key={x}>
            <ellipse cx={x} cy={y} rx={rx} ry={ry} />
            <path d={`M${x - rx - 1} ${y}V${y - 9}A${rx + 1} ${ry + 4} 0 0 1 ${x + rx + 1} ${y - 9}V${y}`} />
            <path d={`M${x - rx - 1} ${y - 5}A${rx + 1} ${ry + 2} 0 0 1 ${x + rx + 1} ${y - 5}`} strokeWidth="1" />
            <path d={`M${x - rx} ${y + 4}A${rx + 1} ${ry + 3} 0 0 0 ${x + rx} ${y + 4}`} strokeWidth="1" />
            <path d={`M${x + 2} ${y - ry - 13}v13M${x + 2} ${y + ry}v6`} strokeWidth="1" />
          </g>
        ))}
        {loops.map(([x, y]) => (
          <path key={`${x}-${y}`} d={`M${x - 4} ${y - 5}h8M${x - 2.5} ${y - 5}v5q2.500 4 5 0v-5`} strokeWidth="1.500" />
        ))}
      </g>
      <g fill="#16218a">
        {bigStones.map(([x, y]) => bigProngs.map(([dx, dy]) => <circle key={`${x}-${y}-${dx}-${dy}`} cx={x + dx} cy={y + dy} r="2.800" />))}
        {smallStones.map(([x, y]) => smallProngs.map(([dx, dy]) => <circle key={`${x}-${y}-${dx}-${dy}`} cx={x + dx} cy={y + dy} r="2.400" />))}
      </g>
      <g fill="#870607" stroke="#870607">
        {bigStones.map(([x, y]) => (
          <g key={`${x}-${y}`}>
            <ellipse cx={x} cy={y} rx="12" ry="8" strokeWidth="1" strokeDasharray="2 1" />
            <ellipse cx={x} cy={y} rx="7" ry="4.500" fill="none" stroke="#a84a40" strokeWidth=".6" strokeDasharray="1 3" />
            <ellipse cx={x} cy={y} rx="3" ry="2" fill="none" stroke="#a04438" strokeWidth=".6" strokeDasharray="1 2.500" />
          </g>
        ))}
      </g>
      <g fill="#d54c4e" stroke="#d54c4e">
        {smallStones.map(([x, y]) => (
          <ellipse key={`${x}-${y}`} cx={x} cy={y} rx="7.500" ry="5" strokeWidth="2" strokeDasharray="2 1.500" />
        ))}
      </g>
      <g stroke="#5d6269" fill="#5d6269">
        <path d="M486.500 782V803.500H515" fill="none" />
        <text x="489" y="781" fontSize="12" stroke="none">y</text>
        <text x="489" y="785" fontSize="12" stroke="none">z</text>
        <text x="518" y="805" fontSize="12" stroke="none">x</text>
      </g>
    </svg>
  );
}

/* ---------- panels ---------- */

const layers = [
  { name: "finished part", color: "bg-[#16218a]", current: true },
  { name: "DIAMONDS 1.4", color: "bg-[#870607]", current: false },
  { name: "diamonds 1", color: "bg-[#d04a4d]", current: false },
];

function LayersPanel() {
  return (
    <section className="flex w-[194px] shrink-0 flex-col border-r border-[#b9c4dd] pt-1 pl-[2px]">
      <Grip />
      <div className="mt-[3px] flex h-5 items-end justify-between">
        <div className="flex h-5 items-center gap-[2px] border-t border-[#c3cce2] pl-1">
          <Icon name="layers" className="size-4" />
          Layers
          <svg viewBox="0 0 22 20" className="-my-px ml-px h-5 w-[22px]" aria-hidden="true"><path d="M0 .5L20 20" fill="none" stroke="#b9c4dd" /></svg>
        </div>
        <Settings className="mb-px size-[14px] text-[#b9c4d4]" strokeWidth={1.5} />
      </div>
      <div className="flex h-[35px] items-center gap-[7px] overflow-hidden border-t border-[#b9c4dd] pl-2">
        {["new", "copy", "del", "up", "down", "left", "filter", "page2"].map((n) => (
          <button key={n} type="button" aria-label={n} className="shrink-0"><Icon name={n} className="size-4" /></button>
        ))}
      </div>
      <div className="flex min-h-0 flex-1 flex-col bg-white pr-[2px]">
        <table className="w-full table-fixed border-collapse text-left">
          <thead>
            <tr className="h-[23px] border-t border-[#b9c4dd]">
              <th className="w-[98px] border-r border-[#d5dbe9] pl-[5px] font-normal">Layer</th>
              <th className="w-[28px] border-r border-[#d5dbe9] pl-[5px] font-normal">C...</th>
              <th className="w-[17px] border-r border-[#d5dbe9]" />
              <th className="w-[17px] border-r border-[#d5dbe9]" />
              <th className="w-[17px] border-r border-[#d5dbe9]" />
              <th className="overflow-hidden pl-1 font-normal">M</th>
            </tr>
          </thead>
          <tbody>
            {layers.map((l) => (
              <tr key={l.name} className={`h-[19px] border-b border-[#eceef4] ${l.current ? "bg-[#859fec] font-bold" : ""}`}>
                <td className="pl-2 leading-[17px] whitespace-nowrap">{l.name}</td>
                <td>{l.current && <svg viewBox="0 0 14 10" className="ml-[6px] h-[10px] w-[14px]" aria-hidden="true"><path d="M1 5l3 4 9-8" fill="none" stroke="#111" strokeWidth="1.300" /></svg>}</td>
                <td>{!l.current && <svg viewBox="0 0 10 14" className="mx-auto h-[13px] w-[10px]" aria-hidden="true"><path d="M3 9Q0 6 1 3q4-4 8 0 1 3-2 6v3l-2 1-2-1z" fill="#fbe67a" stroke="#444" /></svg>}</td>
                <td>{!l.current && <svg viewBox="0 0 14 14" className="h-[13px] w-[14px]" aria-hidden="true"><path d="M8 6V3q2-3 4 0v2" fill="none" stroke="#222" strokeWidth="1.300" /><path d="M1 6h9v7H1z" fill="#f8dc4c" stroke="#443" /></svg>}</td>
                <td><span className={`ml-[2px] block size-3 border ${l.current ? "border-white" : "border-[#222]"} ${l.color}`} /></td>
                <td>{l.current && <span className="ml-[2px] block h-4 rounded-l-full bg-white" />}</td>
              </tr>
            ))}
          </tbody>
        </table>
      </div>
      <div className="mb-1 flex h-[17px] shrink-0 items-center border-b border-[#b9c4dd] bg-[#f0f1f3] pr-[3px]">
        <ChevronLeft className="size-4" />
        <span className="h-4 w-[68px] bg-[#cdcdcd]" />
        <ChevronRight className="ml-auto size-4" />
      </div>
    </section>
  );
}

function RenderingPanel() {
  return (
    <section className="ml-[7px] flex w-[181px] shrink-0 flex-col">
      <h2 className="flex h-[19px] items-end gap-1 pl-1">
        Rendering
        <span className="mb-[5px] flex-1"><Grip /></span>
      </h2>
      <div className="flex h-[23px] items-end" role="tablist">
        {["wheel", "ballHand", "tube2", "open", "helpWin"].map((n, i) => (
          <button key={n} type="button" role="tab" aria-label={n} className={`grid shrink-0 place-items-center ${i === 0 ? "h-5 w-[29px]" : i === 1 ? "h-[22px] w-[31px] border-x border-t border-[#b9c4dd]" : "h-5 w-[31px]"}`}>
            <Icon name={n} className="size-4" />
          </button>
        ))}
        <Settings className="mb-[2px] ml-3 size-[14px] shrink-0 text-[#b9c4d4]" strokeWidth={1.5} />
      </div>
      <div className="mb-1 flex min-h-0 flex-1 flex-col overflow-hidden border border-[#b9c4dd]">
        <div className="flex min-h-0 flex-1 overflow-hidden">
          <form className="flex w-[156px] shrink-0 flex-col overflow-hidden" onSubmit={(e) => e.preventDefault()}>
            <div className="flex h-[18px] shrink-0 items-center justify-end">
              <label htmlFor="quality" className="pr-[6px] pb-[2px] leading-[14px]">Quality:</label>
              <span className="relative">
                <select id="quality" className="h-[18px] w-[88px] appearance-none border-x border-b border-[#b9c4dd] bg-[#f1f1f2] pb-[2px] pl-[3px]">
                  <option>Draft quality</option>
                  <option>Final quality</option>
                </select>
                <ChevronDown className="pointer-events-none absolute top-[3px] right-[3px] size-3" strokeWidth={1.5} />
              </span>
            </div>
            <div className="mt-[19px] shrink-0"><Section title="Backdrop" /></div>
            <div className="mt-[9px] flex h-[26px] shrink-0 items-center justify-between pr-[7px] pl-7">
              <Radio label="Solid color" on />
              <button type="button" aria-label="Backdrop color" className="h-6 w-4 bg-[#9f9f9f]" />
            </div>
            <div className="flex h-[25px] shrink-0 items-center pl-7"><Radio label="Gradient" /></div>
            <div className="flex h-[26px] shrink-0 items-center pl-7"><Radio label="360° Environment" /></div>
            <EnvPicker dim />
            <div className="flex h-[26px] shrink-0 items-center pl-7"><Radio label="Wallpaper" /></div>
            <div className="mt-[15px] flex h-[26px] shrink-0 items-center pl-[27px]"><Check label="Transparent backg..." /></div>
            <div className="mt-2 flex h-7 shrink-0 items-center justify-between pr-[3px] pl-[27px]">
              <Check label="Ground plane" on />
              <button type="button" aria-label="Ground plane settings" className="grid h-7 w-5 place-items-center border border-[#c3cce2]"><Icon name="grid" className="size-[18px]" /></button>
            </div>
            <div className="mt-[5px] flex h-[26px] shrink-0 items-center pl-[27px]"><Check label="Use custom enviro..." on /></div>
            <div className="mt-1 flex shrink-0"><EnvPicker /></div>
            <div className="mt-[18px] shrink-0"><Section title="Lighting" /></div>
            <div className="mt-2 flex h-7 shrink-0 items-center justify-between pr-[3px] pl-[27px]">
              <Check label="Sun" on />
              <button type="button" aria-label="Sun settings" className="grid h-7 w-5 place-items-center border border-[#c3cce2]"><Icon name="sun" className="size-4" /></button>
            </div>
            <div className="mt-[13px] flex h-[23px] shrink-0 items-center justify-between pr-[11px] pl-[27px]">
              <Check label="Intensity:" on half />
              <span className="flex h-[23px] border border-[#b9c4dd] bg-white">
                <input aria-label="Intensity" defaultValue="1.0" className="w-[35px] pl-[5px] outline-none" />
                <span className="flex w-3 flex-col items-center justify-around border-l border-[#c3cce2]">
                  <svg viewBox="0 0 6 4" className="h-1 w-[6px]" aria-hidden="true"><path d="M0 4l3-4 3 4z" fill="#222" /></svg>
                  <span className="h-px w-full bg-[#c3cce2]" />
                  <svg viewBox="0 0 6 4" className="h-1 w-[6px]" aria-hidden="true"><path d="M0 0l3 4 3-4z" fill="#222" /></svg>
                </span>
              </span>
            </div>
            <div className="mt-px flex h-[26px] shrink-0 items-center pl-[43px]"><Check label="Use custom en..." on /></div>
            <div className="mt-[2px] flex shrink-0"><EnvPicker /></div>
            <div className="mt-2 flex h-[25px] shrink-0 items-center pr-[3px] pl-[25px]">
              <button type="button" className="flex h-[25px] w-[45px] items-center gap-1 border border-[#c3cce2] pl-[2px]">
                <Icon name="lightBulb" className="size-[17px] shrink-0" />Li...
              </button>
              <span>nt light:</span>
              <button type="button" aria-label="Ambient light color" className="ml-auto flex h-[25px] items-center border border-[#99a]">
                <span className="h-[25px] w-6 bg-black" />
                <ChevronDown className="size-3" strokeWidth={1.5} />
              </button>
            </div>
          </form>
          <div className="mr-[2px] ml-auto flex w-[15px] shrink-0 flex-col items-center border-l border-white bg-[#f0f0f0]">
            <ChevronUp className="mt-[2px] size-3" strokeWidth={3} />
            <span className="mt-[97px] h-[169px] w-full bg-[#cdcdcd]" />
            <ChevronDown className="mt-auto mb-1 size-3" strokeWidth={3} />
          </div>
        </div>
        <div className="flex h-10 shrink-0 items-center border-t border-[#dde2ee] pr-1">
          <button type="button" className="flex h-[34px] w-[68px] items-center overflow-hidden border-y border-r border-[#b9c4dd]">
            <span className="-ml-[3px]">o Defaults</span>
          </button>
          <button type="button" className="ml-[3px] flex h-[34px] flex-1 items-center border border-[#b9c4dd] pl-[3px]">
            <svg viewBox="0 0 24 24" className="size-[22px]" aria-hidden="true"><circle cx="12" cy="12" r="11" fill="url(#sphere)" stroke="#111" /></svg>
            <span className="flex-1 pl-1 text-center">Render</span>
          </button>
        </div>
      </div>
    </section>
  );
}

function Viewport() {
  return (
    <section className="relative flex min-w-0 flex-1 flex-col pt-[2px] pr-px">
      <div className="relative z-10 min-h-0 flex-1 bg-[#9da3aa]">
        <WireModel />
        <button type="button" className="absolute top-0 left-0 flex h-[18px] items-center bg-[#859fec] pl-[9px] font-bold text-[#16205c]">
          Perspectiva
          <span className="ml-2 h-[14px] w-px bg-[#16205c]" />
          <svg viewBox="0 0 11 8" className="h-2 w-[11px]" aria-hidden="true"><path d="M2 2h7l-3.500 4z" fill="#111" /></svg>
        </button>
      </div>
      <div className="absolute bottom-[-15px] left-[505px] text-[#b5b7bb]">
        <p className="text-[19px] leading-6">Activar Windows</p>
        <p className="text-[14px] leading-5">Ve a Configuración para activar Windows.</p>
      </div>
      <div className="flex h-[22px] shrink-0 items-start text-[#2a2d35]">
        <button type="button" className="h-[22px] rounded-b border-r border-b border-l border-[#b9c4dd] px-[5px] pt-px pl-[9px]">Perspectiva</button>
        <button type="button" className="h-[22px] pl-[10px]">Top</button>
        <button type="button" className="h-[22px] pl-[15px]">Frontal</button>
        <button type="button" className="h-[22px] pl-4">Izquierda</button>
        <svg viewBox="0 0 10 10" className="mt-[6px] ml-[14px] size-[10px]" aria-hidden="true"><path d="M4 1h2v3h3v2H6v3H4V6H1V4h3z" fill="#fff" stroke="#777" /></svg>
      </div>
    </section>
  );
}

const osnaps: { label: string; on?: boolean; off?: boolean }[] = [
  { label: "End", on: true }, { label: "Near", on: true }, { label: "Point", on: true }, { label: "Mid", on: true }, { label: "Cen" },
  { label: "Int", on: true }, { label: "Perp", on: true }, { label: "Tan" }, { label: "Quad", on: true }, { label: "Knot" },
  { label: "Vertex", on: true },
];

const modes = [
  { label: "Grid Snap", width: "w-[65px]" },
  { label: "Ortho", width: "w-[45px]" },
  { label: "Planar", width: "w-[48px]", on: true },
  { label: "Osnap", width: "w-[47px]", on: true },
  { label: "SmartTrack", width: "w-[75px]", on: true },
  { label: "Gumball", width: "w-[57px]", on: true },
  { label: "Record History", width: "w-[93px]" },
  { label: "Filter", width: "w-[40px]" },
];

function RhinoMark({ className, seven = false }: { className: string; seven?: boolean }) {
  return (
    <svg viewBox="0 0 24 24" className={className} aria-hidden="true">
      <path d="M0 0h24v24H0z" fill="#000" />
      <path d="M2 5l3 6 5 2-3-9 5 7 5 3 5-3 1 6-4 5-6-1-6-3-6-7z" fill="#fff" />
      <path d="M9 16l6 2 5-2-4 6-3 1z" fill="#ccc" />
      <path d="M6 16l4 5 3 1-5-7zM12 14l4 2-2 1z" fill="#000" />
      {seven ? <path d="M17 2h5l-3 7" fill="none" stroke="#ddd" strokeWidth="1.200" /> : <path d="M14 2l7 2-3 7z" fill="#eee" />}
    </svg>
  );
}

function Office({ letter, tone, box, round = false }: { letter: string; tone: string[]; box: string; round?: boolean }) {
  return (
    <svg viewBox="0 0 24 24" className="size-6" aria-hidden="true">
      {round ? (
        <><circle cx="13" cy="12" r="11" fill={tone[0]} /><path d="M13 1a11 11 0 0 1 11 11H13z" fill={tone[1]} /></>
      ) : (
        <><rect x="5" y="1" width="19" height="22" rx="1" fill={tone[0]} /><path d="M5 1h19v6H5z" fill={tone[1]} /><path d="M5 12h19v5H5z" fill={tone[2]} /></>
      )}
      <rect y="6" width="12" height="12" rx="1" fill={box} />
      <text x="6" y="15.500" textAnchor="middle" fontSize="10" fontWeight="700" fill="#fff">{letter}</text>
    </svg>
  );
}

function Taskbar() {
  return (
    <footer className="flex h-10 shrink-0 items-stretch bg-[#050a12] text-white">
      <button type="button" aria-label="Start" className="grid w-12 place-items-center">
        <svg viewBox="0 0 16 16" className="size-4" aria-hidden="true"><path d="M0 2l7-1v6.500H0zM8 1l8-1v7.500H8zM0 8.500h7V15l-7-1zM8 8.500h8V16l-8-1z" fill="#fff" /></svg>
      </button>
      <label className="flex w-[344px] items-center gap-[10px] bg-[#f2f2f2] px-[9px] text-[#333]">
        <span className="size-[21px] rounded-full border-[3px] border-black" />
        <input type="text" placeholder="Escribe aquí para buscar" aria-label="Escribe aquí para buscar" className="min-w-0 flex-1 text-[14px] outline-none placeholder:text-[#333]" />
        <Mic className="mr-[2px] size-[18px]" strokeWidth={1.5} />
      </label>
      <button type="button" aria-label="Task view" className="grid w-[50px] place-items-center">
        <svg viewBox="0 0 18 18" className="size-[18px]" aria-hidden="true"><path d="M1 0v3h10V0M1 18v-3h10v3M1 5.500h10v7H1zM15 0v5M15 11v7" fill="none" stroke="#fff" strokeWidth="1.300" /><path d="M14 7h3v3h-3z" fill="#fff" /></svg>
      </button>
      <button type="button" className="grid w-[49px] place-items-center"><span className="grid h-6 w-[22px] place-items-center border border-[#ee7a1c] bg-[#1c0a00] text-[13px] leading-none font-bold text-[#ee7a1c]">Ai</span></button>
      <button type="button" aria-label="Excel" className="grid w-[49px] place-items-center"><Office letter="X" tone={["#21a366", "#33c481", "#107c41"]} box="#107c41" /></button>
      <button type="button" aria-label="PowerPoint" className="grid w-[49px] place-items-center"><Office letter="P" tone={["#ed6c47", "#ff8f6b"]} box="#c43e1c" round /></button>
      <button type="button" aria-label="Word" className="grid w-[49px] place-items-center"><Office letter="W" tone={["#2b7cd3", "#41a5ee", "#185abd"]} box="#185abd" /></button>
      <button type="button" aria-label="Explorer" className="grid w-[49px] place-items-center">
        <span className="grid h-10 w-[42px] place-items-center border-b-2 border-[#76b9ed]">
          <svg viewBox="0 0 24 24" className="size-[22px]" aria-hidden="true"><path d="M1 3h9l2 2h11v17H1z" fill="#f8d775" /><path d="M3 1h7v4H3z" fill="#e8b030" /><path d="M5 13h14v10h-4v-5H9v5H5z" fill="#3f9ede" /></svg>
        </span>
      </button>
      <button type="button" className="grid w-[49px] place-items-center">
        <span className="grid h-10 w-[40px] place-items-center border-b-2 border-[#76b9ed]">
          <span className="grid h-6 w-[22px] place-items-center border border-[#2cc0e8] bg-[#00202c] text-[13px] leading-none font-bold text-[#2cc0e8]">Ps</span>
        </span>
      </button>
      <button type="button" aria-label="Calculator" className="grid w-[49px] place-items-center">
        <svg viewBox="0 0 18 24" className="h-6 w-[18px]" aria-hidden="true"><path d="M0 0h18v24H0z" fill="#fff" /><path d="M2 2h14v5H2z" fill="#111" /><path d="M3 11h12M3 15h12M3 19h12" stroke="#111" strokeWidth="2" strokeDasharray="2 3" /></svg>
      </button>
      <button type="button" aria-label="Rhinoceros" className="grid w-[48px] place-items-center border-b-2 border-[#76b9ed] bg-[#3a3f45]"><RhinoMark className="size-[26px]" seven /></button>
      <div className="ml-auto flex items-center text-[11px]">
        <svg viewBox="0 0 18 18" className="size-[18px]" aria-hidden="true"><g fill="none" stroke="#fff" strokeWidth="1.300"><circle cx="12" cy="4" r="2.500" /><circle cx="6" cy="9" r="2.500" /><path d="M2 17q0-5 4-5t4 5M9 8q7-3 7 4" /></g></svg>
        <ChevronUp className="ml-[18px] size-[18px]" strokeWidth={1.5} />
        <svg viewBox="0 0 18 18" className="ml-[7px] size-[17px]" aria-hidden="true"><path d="M5 1h6L6 17H1z" fill="#28b8b0" /><path d="M9 12l4-3 5 8h-6z" fill="#3a8ee8" /><path d="M1 13l5 4H1z" fill="#f8c820" /><circle cx="12" cy="6" r="5" fill="#f07020" /><path d="M15 5q-2-3-5-1-1 3 2 4l3-1" stroke="#fff" strokeWidth="1.300" fill="none" /></svg>
        <svg viewBox="0 0 18 18" className="ml-[7px] size-[17px]" aria-hidden="true"><rect x="1" y="1" width="14" height="14" rx="5" fill="#1fa8b8" /><circle cx="8" cy="8" r="5.500" fill="#e8f4f6" /><path d="M5 8h6q0-3-3-3T5 8t3 3h2" fill="none" stroke="#118898" strokeWidth="1.500" /><path d="M13 10l5 7H8z" fill="#e03028" /></svg>
        <svg viewBox="0 0 18 18" className="ml-[7px] size-[17px]" aria-hidden="true"><path d="M1 1h5v3H1zM3 4v8M8 3h9v9H4M6 15h8" fill="none" stroke="#fff" strokeWidth="1.300" /><circle cx="12.500" cy="12.500" r="5" fill="#e02828" /><path d="M10.500 10.500l4 4M14.500 10.500l-4 4" stroke="#fff" strokeWidth="1.300" /></svg>
        <Volume2 className="ml-[7px] size-[17px]" strokeWidth={1.3} />
        <span className="ml-3">ESP</span>
        <time className="ml-[13px] w-[62px] text-center leading-[17px] whitespace-nowrap">12:14 a. m.<br />10/07/2024</time>
        <button type="button" aria-label="Notifications" className="relative mr-[18px] ml-[17px] size-6">
          <svg viewBox="0 0 24 24" className="size-6" aria-hidden="true"><path d="M1 3h16v12H9l-4 4v-4H1z" fill="#fff" /><path d="M4 6h10M4 9h10M4 12h6" stroke="#111" /></svg>
          <span className="absolute top-[9px] left-[7px] grid size-4 place-items-center rounded-full border border-[#888] bg-[#2c3036] text-[11px] leading-none">5</span>
        </button>
      </div>
    </footer>
  );
}

export default function App() {
  const [activeTab, setActiveTab] = useState("SubD Tools");

  return (
    <div className="flex h-screen flex-col overflow-hidden bg-[#e9ebef] font-['Open_Sans','Noto_Sans',sans-serif] text-[11px] leading-[15px] text-[#16181d]">
      {/* Shared gradients */}
      <svg className="absolute size-0" aria-hidden="true">
        <defs>
          <linearGradient id="blue" x1="0" y1="0" x2="1" y2="1"><stop offset="0" stopColor="#a4b8ff" /><stop offset="1" stopColor="#4a6be0" /></linearGradient>
          <linearGradient id="grey" x1="0" y1="0" x2="1" y2="1"><stop offset="0" stopColor="#f2f2f2" /><stop offset="1" stopColor="#777" /></linearGradient>
          <linearGradient id="paper" x1="0" y1="0" x2="1" y2="1"><stop offset="0" stopColor="#fff" /><stop offset="1" stopColor="#d8d8d8" /></linearGradient>
          <linearGradient id="yellow" x1="0" y1="0" x2="0" y2="1"><stop offset="0" stopColor="#fff08a" /><stop offset="1" stopColor="#eeb418" /></linearGradient>
          <linearGradient id="fire" x1="0" y1="0" x2="1" y2="1"><stop offset="0" stopColor="#ffe030" /><stop offset="1" stopColor="#f06a08" /></linearGradient>
          <linearGradient id="env" x1="0" y1="0" x2="0" y2="1"><stop offset="0" stopColor="#c6c6c6" /><stop offset="1" stopColor="#d2d2d2" /></linearGradient>
          <radialGradient id="steel" cx=".35" cy=".3" r=".8"><stop offset="0" stopColor="#fff" /><stop offset="1" stopColor="#4a4a4a" /></radialGradient>
          <radialGradient id="sphere" cx=".35" cy=".3" r=".75"><stop offset="0" stopColor="#e8f0ff" /><stop offset=".35" stopColor="#3f6ee8" /><stop offset="1" stopColor="#06145c" /></radialGradient>
        </defs>
      </svg>

      <header className="flex h-[22px] shrink-0 items-center bg-white pl-[2px]">
        <RhinoMark className="size-4" />
        <h1 className="ml-[5px]">DW 6900 DIAL FULL STONES (14 MB) - Rhinoceros 7 Commercial - [Perspectiva]</h1>
        <div className="ml-auto flex items-center gap-[33px] pr-[18px]">
          <button type="button" aria-label="Minimize"><Minus className="size-3" strokeWidth={2} /></button>
          <button type="button" aria-label="Restore"><svg viewBox="0 0 12 12" className="size-3" aria-hidden="true"><path d="M1.500 3.500h7v7h-7zM3.500 3V1.500h7v7H9" fill="none" stroke="#222" /></svg></button>
          <button type="button" aria-label="Close"><X className="size-[14px]" strokeWidth={2} /></button>
        </div>
      </header>

      <nav className="flex h-[21px] shrink-0 items-center gap-[15px] bg-white pl-[7px]">
        {menus.map((m) => <button key={m} type="button">{m}</button>)}
      </nav>

      <div className="h-[66px] shrink-0 border-y border-[#d5dbe9] pr-[2px] pl-[6px]">
        <div className="flex h-[45px] bg-white">
          <div className="flex-1 pl-[2px]">
            <p>Display mode set to "Rendered".</p>
            <p>Display mode set to "Shaded".</p>
            <p>Display mode set to "Wireframe".</p>
          </div>
          <div className="flex w-[15px] flex-col items-center justify-between bg-[#f0f0f0] py-1"><ChevronUp className="size-[10px]" strokeWidth={3} /><ChevronDown className="size-[10px]" strokeWidth={3} /></div>
        </div>
        <div className="flex h-[19px] items-center border-t border-[#aeb6c6] bg-white pb-[3px] pl-[2px]">
          <label htmlFor="command" className="font-bold">Command:</label>
          <span className="ml-[3px] h-[14px] w-px bg-black" />
          <input id="command" className="min-w-0 flex-1 outline-none" />
          <span className="flex h-[15px] w-[13px] flex-col items-center justify-around border border-[#b9c4dd] bg-[#f0f0f0]">
            <svg viewBox="0 0 6 4" className="h-1 w-[6px]" aria-hidden="true"><path d="M0 4l3-4 3 4z" fill="#222" /></svg>
            <svg viewBox="0 0 6 4" className="h-1 w-[6px]" aria-hidden="true"><path d="M0 0l3 4 3-4z" fill="#222" /></svg>
          </span>
        </div>
      </div>

      <div className="flex h-10 shrink-0 items-center border-b border-[#d5dbe9] pl-[6px]">
        {standardTools.map((t) => <ToolButton key={t} id={t} />)}
      </div>

      <div className="flex h-[21px] shrink-0 items-end border-b border-[#b9c4dd] pl-[6px]" role="tablist">
        {toolTabs.map((t) => (
          <button
            key={t}
            type="button"
            role="tab"
            aria-selected={t === activeTab}
            onClick={() => setActiveTab(t)}
            className={`px-[11px] text-[#3c404a] ${t === activeTab ? "-mb-px h-[17px] rounded-tl-md border-x border-t border-[#b9c4dd] bg-[#e9ebef]" : "h-4"}`}
          >
            {t}
          </button>
        ))}
        <Settings className="mr-px mb-[2px] ml-auto size-[15px] text-[#8a8e96]" strokeWidth={1.5} />
      </div>

      <div className="flex h-[37px] shrink-0 items-start overflow-hidden pt-px pl-[6px]">
        {subdTools.map((set, i) => (
          <div key={i} className="flex shrink-0 items-center">
            {i > 0 && <span className="mr-[2px] ml-[3px] h-6 w-px bg-[#c0c4cc]" />}
            {set.map((t) => <ToolButton key={t} id={t} />)}
          </div>
        ))}
        <button type="button" aria-label="More tools" className="ml-4 h-[26px] text-[15px]">»</button>
      </div>

      <main className="flex min-h-0 flex-1">
        <LayersPanel />
        <RenderingPanel />
        <aside className="ml-1 w-[60px] shrink-0 border-l border-[#c3cce2] pt-1">
          <div className="mx-[5px]"><Grip /></div>
          <div className="mt-[2px] grid grid-cols-[28px_28px]">
            {sideTools.map((t) => <ToolButton key={t} id={t} />)}
          </div>
        </aside>
        <span className="w-[3px] shrink-0" />
        <Viewport />
      </main>

      <div className="flex h-[37px] shrink-0 items-start gap-[7px] pt-2 pl-[9px]">
        {osnaps.map((o) => <Check key={o.label} {...o} tight />)}
        <span className="flex gap-[14px]">
          <Check label="Project" off />
          <Check label="Disable" off />
        </span>
      </div>

      <div className="flex h-[21px] shrink-0 items-stretch border-t border-[#b9c4dd] *:border-r *:border-[#b9c4dd]">
        <button type="button" className="w-[50px]">CPlane</button>
        <span className="grid w-[88px] place-items-center">x 65.15</span>
        <span className="grid w-[88px] place-items-center">y 39.58</span>
        <span className="grid w-[88px] place-items-center">z</span>
        <button type="button" className="w-[88px]">Millimeters</button>
        <button type="button" className="flex w-[168px] items-center gap-[2px] pl-[3px]"><span className="size-[14px] border border-[#222] bg-[#16218a]" />finished part</button>
        {modes.map((m) => (
          <button key={m.label} type="button" aria-pressed={!!m.on} className={`whitespace-nowrap ${m.width} ${m.on ? "bg-[#cfd7ef] font-bold" : ""}`}>{m.label}</button>
        ))}
      </div>

      <Taskbar />
    </div>
  );
}
